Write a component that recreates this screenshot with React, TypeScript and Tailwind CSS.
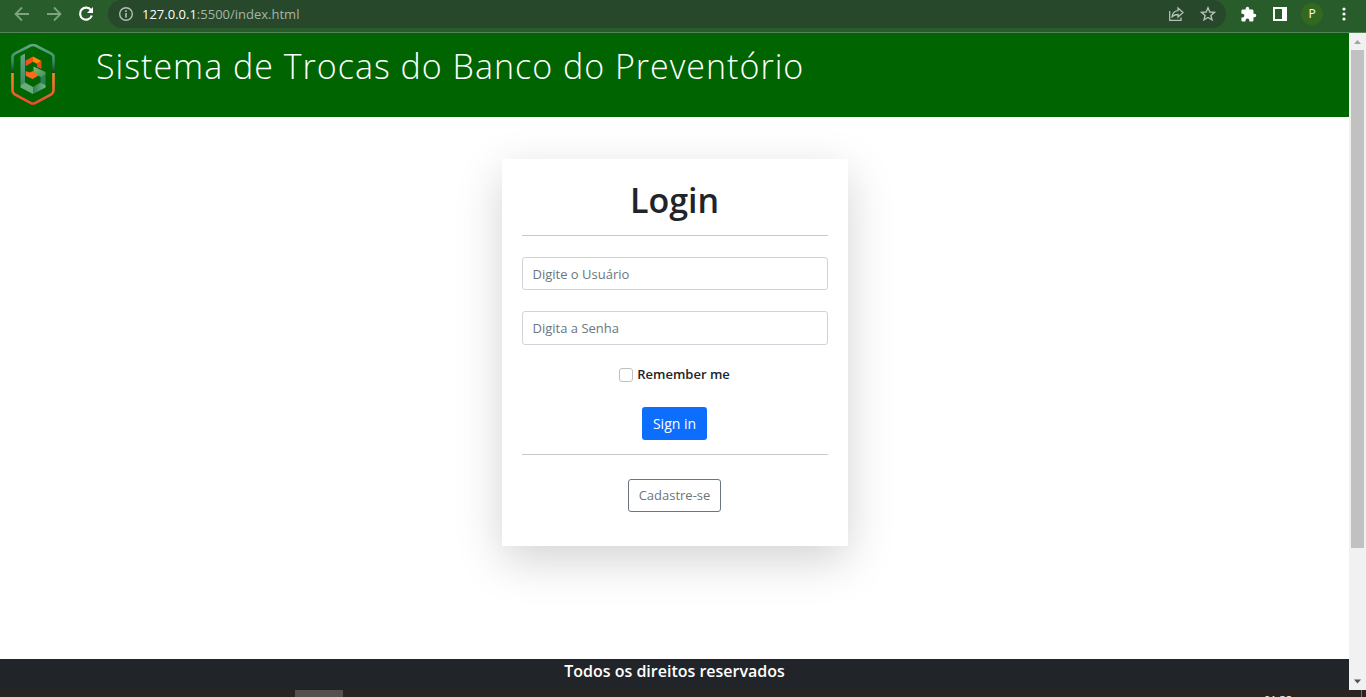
import React from "react";

const Logo = () => (
  <svg width="46" height="64" viewBox="0 0 46 64" fill="none" aria-label="Banco do Preventório" role="img" className="shrink-0">
    <defs>
      <linearGradient id="ringTop" x1="0" y1="0" x2="0" y2="1">
        <stop offset="0" stopColor="#5fa886" />
        <stop offset="0.6" stopColor="#3f8a66" />
        <stop offset="1" stopColor="#123f26" />
      </linearGradient>
      <linearGradient id="ringBottom" x1="0" y1="0" x2="0" y2="1">
        <stop offset="0" stopColor="#f58a2c" />
        <stop offset="1" stopColor="#ef4a30" />
      </linearGradient>
      <linearGradient id="stem" x1="0" y1="0" x2="0" y2="1">
        <stop offset="0" stopColor="#5fa98a" />
        <stop offset="1" stopColor="#3f8a68" />
      </linearGradient>
      <linearGradient id="fold" x1="0" y1="0" x2="1" y2="1">
        <stop offset="0" stopColor="#7fbf74" />
        <stop offset="1" stopColor="#3f8f5c" />
      </linearGradient>
      <linearGradient id="base" x1="0" y1="0" x2="1" y2="0">
        <stop offset="0" stopColor="#2f7d59" />
        <stop offset="1" stopColor="#79b980" />
      </linearGradient>
    </defs>
    <path d="M2.5 30V14.500Q2.500 12 4.700 10.700L20.500 2.500Q23 1.400 25.500 2.500L41.300 10.700Q43.500 12 43.500 14.500V30" stroke="url(#ringTop)" strokeWidth="2.600" />
    <path d="M2.500 30V47.500Q2.500 50 4.700 51.300L20.500 59.800Q23 61.200 25.500 59.800L41.300 51.300Q43.500 50 43.500 47.500V30" stroke="url(#ringBottom)" strokeWidth="2.600" />
    <path d="M10.500 13L15 10.500V40L10.500 42.500Z" fill="url(#stem)" />
    <path d="M10.500 42.500L15 39.500L23 44V51L10.500 44.500Z" fill="#69ad7c" />
    <path d="M23 44L30.500 39.500L35.500 42V44.500L23 51Z" fill="url(#base)" />
    <path d="M30.500 33L35.500 30V42L30.500 39.500Z" fill="#2f8058" />
    <path d="M23.500 23.500L35.500 29V31.500L30.500 34L23.500 29.500Z" fill="url(#fold)" />
    <path d="M15.700 17.500L23 13.500V18.800L15.700 23.200Z" fill="#f4511e" />
    <path d="M23 13.500L31.500 18L27 20.800L23 18.800Z" fill="#ff8a00" />
    <path d="M27 20.800L31.500 18V26L27 24Z" fill="#f0441c" />
    <path d="M15.700 28L19.500 29.500L23 28L28.500 32.500L22.500 36L15.700 32.800Z" fill="#ff6a1a" />
  </svg>
);

const BrowserBar = () => (
  <header className="flex h-[33px] shrink-0 items-start border-b border-[#54825a] bg-[#285c2b] pl-3">
    <div className="flex h-7 items-center gap-3 pr-3">
      <button type="button" aria-label="Voltar" className="text-[#7fa281]">
        <svg width="20" height="20" viewBox="0 0 20 20" fill="none" stroke="currentColor" strokeWidth="1.800"><path d="M17 10H4M10 3.500L3.500 10L10 16.500" /></svg>
      </button>
      <button type="button" aria-label="Avançar" className="text-[#7fa281]">
        <svg width="20" height="20" viewBox="0 0 20 20" fill="none" stroke="currentColor" strokeWidth="1.800"><path d="M3 10H16M10 3.500L16.500 10L10 16.500" /></svg>
      </button>
      <button type="button" aria-label="Recarregar" className="text-white">
        <svg width="20" height="20" viewBox="0 0 20 20" fill="none"><path d="M15 6.200A6 6 0 1 0 15.800 11.500" stroke="currentColor" strokeWidth="2.200" /><path d="M17 3V9H11Z" fill="currentColor" /></svg>
      </button>
    </div>
    <div className="flex h-7 min-w-0 grow items-center rounded-full bg-[#27482a] pr-2.5 pl-2.5">
      <svg width="16" height="16" viewBox="0 0 16 16" fill="none" className="shrink-0"><circle cx="8" cy="8" r="6.300" stroke="#b4c0b4" strokeWidth="1.400" /><path d="M8 7V11.500M8 4.300V5.900" stroke="#b4c0b4" strokeWidth="1.600" /></svg>
      <p className="grow pl-2 text-[13px] leading-5 text-[#a6b5a7]"><span className="text-white">127.0.0.1</span>:5500/index.html</p>
      <div className="flex items-center gap-4">
        <button type="button" aria-label="Compartilhar" className="text-[#b4c0b4]">
          <svg width="16" height="16" viewBox="0 0 16 16" fill="none" stroke="currentColor" strokeWidth="1.300"><path d="M1.700 5V14.300H13V11.500" /><path d="M10 2L15 6.500L10 11V8.500C7 8.500 5 9.500 3.800 11.500C4.200 7.500 6.500 5 10 4.600Z" /></svg>
        </button>
        <button type="button" aria-label="Favoritar" className="text-[#b4c0b4]">
          <svg width="16" height="16" viewBox="0 0 16 16" fill="none" stroke="currentColor" strokeWidth="1.400"><path d="M8 1.800L9.800 6L14.400 6.400L10.900 9.400L12 13.900L8 11.500L4 13.900L5.100 9.400L1.600 6.400L6.200 6Z" /></svg>
        </button>
      </div>
    </div>
    <div className="flex h-7 shrink-0 items-center gap-3 px-3">
      <button type="button" aria-label="Extensões" className="flex size-5 items-center justify-center text-white">
        <svg width="17" height="17" viewBox="0 0 24 24" fill="currentColor"><path d="M20.500 11H19V7c0-1.100-.9-2-2-2h-4V3.500a2.500 2.500 0 0 0-5 0V5H4c-1.100 0-2 .9-2 2v3.800h1.500a2.700 2.700 0 0 1 0 5.400H2V20c0 1.100.9 2 2 2h3.800v-1.500a2.700 2.700 0 0 1 5.400 0V22H17c1.100 0 2-.9 2-2v-4h1.500a2.500 2.500 0 0 0 0-5z" /></svg>
      </button>
      <button type="button" aria-label="Painel lateral" className="text-white">
        <svg width="20" height="20" viewBox="0 0 20 20"><path fill="currentColor" fillRule="evenodd" d="M3 3H17V17H3ZM5 5V15H12V5Z" /></svg>
      </button>
      <button type="button" aria-label="Perfil" className="-mx-px size-[22px] rounded-full bg-[#33691e] text-xs leading-[22px] text-white">P</button>
      <button type="button" aria-label="Menu" className="text-white">
        <svg width="20" height="20" viewBox="0 0 20 20" fill="currentColor"><circle cx="10" cy="5" r="1.600" /><circle cx="10" cy="10" r="1.600" /><circle cx="10" cy="15" r="1.600" /></svg>
      </button>
    </div>
  </header>
);

const ScrollBar = () => (
  <div aria-hidden="true" className="flex w-[17px] shrink-0 flex-col items-center bg-[#f1f1f1]">
    <svg width="17" height="17" viewBox="0 0 17 17"><path d="M5 11L8.500 7L12 11Z" fill="#a3a3a3" /></svg>
    <div className="flex w-full grow flex-col items-center">
      <div className="h-4/5 w-[13px] bg-[#c1c1c1]" />
    </div>
    <svg width="17" height="17" viewBox="0 0 17 17"><path d="M5 6.500H12L8.500 10.500Z" fill="#505050" /></svg>
  </div>
);

const field =
  "block w-full rounded-[3px] border border-[#ced4da] bg-white px-2.5 text-[13px] text-[#212529] placeholder:text-[#6c757d]";

const LoginCard = () => (
  <form className="flex w-[346px] flex-col items-center bg-white p-5 pb-[34px] shadow-[0_14px_43px_rgba(0,0,0,0.175)]" onSubmit={(e) => e.preventDefault()}>
    <h2 className="text-[34px] leading-[43px] font-semibold">Login</h2>
    <hr className="mt-[13px] w-full border-[#c8c9ca]" />
    <input type="text" aria-label="Usuário" placeholder="Digite o Usuário" className={`${field} mt-[21px] h-[33px]`} />
    <input type="password" aria-label="Senha" placeholder="Digita a Senha" className={`${field} mt-[21px] h-[34px]`} />
    <label className="mt-[18px] flex items-center gap-1 text-[13px] leading-[22px] font-semibold">
      <input type="checkbox" className="mt-0.5 size-3.5 appearance-none rounded-[3px] border border-[#bfbfbf] bg-white checked:bg-[#0d6efd]" />
      Remember me
    </label>
    <button type="submit" className="mt-[22px] h-[33px] rounded-[3px] bg-[#0d6efd] px-[11px] text-sm text-white">Sign in</button>
    <hr className="mt-3.5 w-full border-[#c8c9ca]" />
    <button type="button" className="mt-6 h-[33px] rounded-[3px] border border-[#6c757d] px-2.5 text-[13px] text-[#6c757d]">Cadastre-se</button>
  </form>
);

export default function App() {
  return (
    <div className="flex h-screen flex-col overflow-hidden bg-white font-['Open_Sans','Noto_Sans',sans-serif] text-[#212529]">
      <BrowserBar />
      <div className="flex min-h-0 grow">
        <div className="flex min-w-0 grow flex-col">
          <div className="flex h-[84px] shrink-0 items-start bg-[#006400] pt-2.5 pl-2.5 text-white">
            <Logo />
            <h1 className="pl-10 text-[34px] leading-[46px] font-light tracking-[1px]">Sistema de Trocas do Banco do Preventório</h1>
          </div>
          <main className="flex min-h-0 grow flex-col items-center pt-[42px]">
            <LoginCard />
          </main>
          <footer className="h-[31px] shrink-0 bg-[#212529] text-center text-base leading-6 font-semibold text-white">Todos os direitos reservados</footer>
        </div>
        <ScrollBar />
      </div>
      <div className="flex h-[7px] shrink-0 overflow-hidden bg-[#2a2420]">
        <div className="ml-[295px] w-12 bg-[#56514d]" />
        <time className="mr-[69px] ml-auto pt-0.5 text-[11px] leading-4 text-white">01:38</time>
        <div className="mr-1 w-px bg-[#77736f]" />
      </div>
    </div>
  );
}
